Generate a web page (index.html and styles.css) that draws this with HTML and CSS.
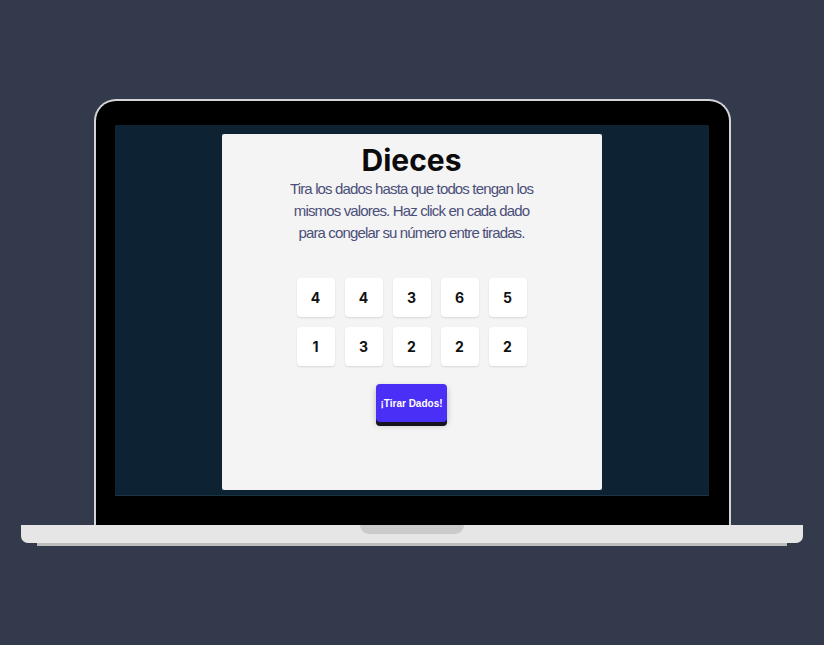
FILE: index.html
```html
<!DOCTYPE html>
<html lang="es">
<head>
<meta charset="utf-8">
<title>Dieces</title>
<link rel="stylesheet" href="styles.css">
</head>
<body>
<div class="stage">
  <div class="laptop">
    <div class="lid">
      <div class="screen">
        <main class="card">
          <h1 class="title">Dieces</h1>
          <p class="instructions">Tira los dados hasta que todos tengan los mismos valores. Haz click en cada dado para congelar su número entre tiradas.</p>
          <div class="dice">
            <button class="die">4</button>
            <button class="die">4</button>
            <button class="die">3</button>
            <button class="die">6</button>
            <button class="die">5</button>
            <button class="die">1</button>
            <button class="die">3</button>
            <button class="die">2</button>
            <button class="die">2</button>
            <button class="die">2</button>
          </div>
          <button class="roll">¡Tirar Dados!</button>
        </main>
      </div>
    </div>
    <div class="base"><div class="notch"></div></div>
    <div class="base-shadow"></div>
  </div>
</div>
</body>
</html>
```
FILE: styles.css
```css
* { box-sizing: border-box; }
html, body { margin: 0; padding: 0; }
body {
  background: #333a4c;
  min-height: 645px;
  font-family: "Liberation Sans", Arial, sans-serif;
}
.stage {
  display: flex;
  justify-content: center;
  padding-top: 99px;
}
.laptop {
  display: flex;
  flex-direction: column;
  align-items: center;
  width: 782px;
}
.lid {
  width: 637px;
  height: 426px;
  background: #000;
  border: 2px solid #d4d4d8;
  border-bottom: none;
  border-radius: 22px 22px 0 0;
  padding: 24px 20px 0 19px;
}
.screen {
  width: 594px;
  height: 371px;
  background: #0d2333;
  border-bottom: 1px solid #1b3444;
  display: flex;
  justify-content: center;
  padding-top: 9px;
}
.card {
  width: 380px;
  height: 356px;
  background: #f4f4f4;
  border-radius: 2px;
  display: flex;
  flex-direction: column;
  align-items: center;
}
.title {
  margin: 8px 0 0;
  font-family: Inter, "Noto Sans", sans-serif;
  font-weight: 700;
  font-size: 30px;
  line-height: 36px;
  color: #0b0b0b;
}
.instructions {
  margin: 0;
  width: 262px;
  text-align: center;
  font-size: 15px;
  line-height: 22px;
  letter-spacing: -0.85px;
  color: #4b4f78;
}
.dice {
  margin-top: 34px;
  display: grid;
  grid-template-columns: repeat(5, 38px);
  gap: 10px;
}
.die {
  width: 38px;
  height: 39px;
  border: none;
  background: #fff;
  border-radius: 4px;
  box-shadow: 0 1px 2px rgba(0,0,0,0.12);
  font-family: Inter, "Noto Sans", sans-serif;
  font-weight: 700;
  font-size: 14px;
  color: #111;
  padding: 0;
}
.roll {
  margin-top: 18px;
  width: 71px;
  height: 38px;
  border: none;
  border-radius: 4px;
  background: #4a2ff6;
  color: #fff;
  font-family: "Liberation Sans", Arial, sans-serif;
  font-weight: 700;
  font-size: 10px;
  padding: 0;
  box-shadow: 0 4px 0 #17141f, 0 3px 6px rgba(0,0,0,0.25);
}
.base {
  width: 782px;
  height: 18px;
  background: #e6e6e6;
  border-radius: 0 0 7px 7px;
  display: flex;
  justify-content: center;
}
.notch {
  width: 104px;
  height: 9px;
  background: #cacaca;
  border-radius: 0 0 9px 9px;
}
.base-shadow {
  width: 750px;
  height: 3px;
  background: #bdbdbd;
}
```
